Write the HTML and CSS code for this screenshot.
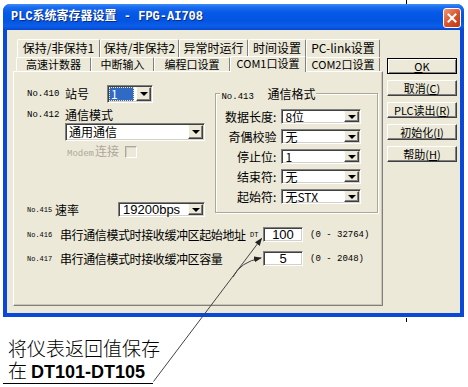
FILE: index.html
```html
<!DOCTYPE html>
<html lang="zh-CN">
<head>
  <meta charset="UTF-8">
  <meta name="viewport" content="width=device-width, initial-scale=1.0">
  <title>PLC系统寄存器设置 - FPG-AI708</title>
  <link rel="stylesheet" href="styles.css">
</head>
<body>
  <div class="page">
    <div class="window">
      <div class="titlebar">
        <span class="title">PLC系统寄存器设置 - FPG-AI708</span>
        <span class="close">
          <svg width="10" height="10" viewBox="0 0 10 10"><path d="M1.5 1.5 L8.5 8.5 M8.5 1.5 L1.5 8.5" stroke="#fff" stroke-width="2" stroke-linecap="square"/></svg>
        </span>
      </div>
      <div class="client">
        <div class="tabbox">
          <div class="tabrow back">
            <span class="tab t1">保持/非保持1</span>
            <span class="tab t2">保持/非保持2</span>
            <span class="tab t3">异常时运行</span>
            <span class="tab t4">时间设置</span>
            <span class="tab t5">PC-link设置</span>
          </div>
          <div class="tabrow front">
            <span class="tab u1">高速计数器</span>
            <span class="tab u2">中断输入</span>
            <span class="tab u3">编程口设置</span>
            <span class="tab u4 active">COM1口设置</span>
            <span class="tab u5">COM2口设置</span>
          </div>
          <div class="panel">
            <div class="upper">
              <div class="leftcol">
                <div class="row r410">
                  <span class="no">No.410</span>
                  <span class="lbl">站号</span>
                  <div class="combo c410"><span class="val sel">1</span><span class="drop"></span></div>
                </div>
                <div class="row r412">
                  <span class="no">No.412</span>
                  <span class="lbl">通信模式</span>
                </div>
                <div class="combo cmode"><span class="val">通用通信</span><span class="drop"></span></div>
                <div class="modem">
                  <span class="modem-text"><span class="latin">Modem</span>连接</span>
                  <span class="chk"></span>
                </div>
                <div class="row r415">
                  <span class="no small">No.415</span>
                  <span class="lbl">速率</span>
                  <div class="combo cbaud"><span class="val num">19200bps</span><span class="drop"></span></div>
                </div>
              </div>
              <div class="group">
                <div class="group-title"><span class="no">No.413</span>通信格式</div>
                <div class="grow"><span class="glbl">数据长度:</span><div class="combo"><span class="val">8位</span><span class="drop"></span></div></div>
                <div class="grow"><span class="glbl">奇偶校验</span><div class="combo"><span class="val">无</span><span class="drop"></span></div></div>
                <div class="grow"><span class="glbl">停止位:</span><div class="combo"><span class="val">1</span><span class="drop"></span></div></div>
                <div class="grow"><span class="glbl">结束符:</span><div class="combo"><span class="val">无</span><span class="drop"></span></div></div>
                <div class="grow"><span class="glbl">起始符:</span><div class="combo"><span class="val">无STX</span><span class="drop"></span></div></div>
              </div>
            </div>
            <div class="row r416">
              <span class="no small">No.416</span>
              <span class="long">串行通信模式时接收缓冲区起始地址</span>
              <span class="dt">DT</span>
              <span class="field">100</span>
              <span class="range">(0 - 32764)</span>
            </div>
            <div class="row r417">
              <span class="no small">No.417</span>
              <span class="long">串行通信模式时接收缓冲区容量</span>
              <span class="dt"></span>
              <span class="field">5</span>
              <span class="range">(0 - 2048)</span>
            </div>
          </div>
        </div>
        <div class="buttons">
          <button class="btn default"><u>O</u>K</button>
          <button class="btn">取消(<u>C</u>)</button>
          <button class="btn">PLC读出(<u>R</u>)</button>
          <button class="btn">初始化(<u>I</u>)</button>
          <button class="btn">帮助(<u>H</u>)</button>
        </div>
      </div>
    </div>
    <div class="note">
      <p>将仪表返回值保存</p>
      <p>在<b>DT101-DT105</b></p>
    </div>
    <!-- callout arrows drawn over the dialog -->
    <svg class="overlay" width="468" height="387" viewBox="0 0 468 387">
      <defs>
        <marker id="ah" markerWidth="8" markerHeight="6" refX="7" refY="3" orient="auto" markerUnits="userSpaceOnUse">
          <path d="M0 0 L8 3 L0 6 Z" fill="#222"/>
        </marker>
      </defs>
      <path d="M153.5 381.5 L261.5 238.5" stroke="#444" stroke-width="1" fill="none" marker-end="url(#ah)"/>
      <path d="M233 277 Q240 262 261 258" stroke="#444" stroke-width="1" fill="none" marker-end="url(#ah)"/>
      <path d="M406.5 0 V4 M406.5 318 V322" stroke="#000" stroke-width="1"/>
    </svg>
  </div>
</body>
</html>
```

FILE: styles.css
```css
body {
  margin: 0;
  background-color: #fff;
  font-family: "Noto Sans CJK SC", sans-serif;
  font-size: 12px;
  color: #000;
}

.page {
  position: relative;
  width: 468px;
  height: 387px;
  padding: 4px 0 0 3px;
  box-sizing: border-box;
  overflow: hidden;
}

.window {
  width: 461px;
  background-color: #0a48d8;
  border-radius: 7px 7px 0 0;
  overflow: hidden;
}

.titlebar {
  display: flex;
  align-items: flex-start;
  height: 26px;
  padding: 0 3px 0 8px;
  background: linear-gradient(#3d8ef7 0%, #1a6cef 12%, #0658e6 35%, #0454e2 65%, #0b5fe9 85%, #0447d2 100%);
}

.title {
  margin-top: 5px;
  font-family: "Liberation Mono", "Noto Sans CJK SC", monospace;
  font-size: 12px;
  font-weight: bold;
  line-height: 16px;
  color: #fff;
  text-shadow: 1px 1px #0c2a80;
  white-space: nowrap;
}

.close {
  display: flex;
  align-items: center;
  justify-content: center;
  margin: 4px 0 0 auto;
  width: 18px;
  height: 20px;
  box-sizing: border-box;
  border: 1px solid #fff;
  border-radius: 3px;
  background: linear-gradient(135deg, #f29873, #d8502a 55%, #b93a14);
}

.client {
  display: flex;
  gap: 4px;
  height: 283px;
  margin: 0 4px 4px;
  padding: 9px 3px 7px 6px;
  box-sizing: border-box;
  background-color: #ece9d8;
}

/* tabs */

.tabbox {
  display: flex;
  flex-direction: column;
  width: 370px;
}

.tabrow {
  display: flex;
}

.tabrow.back {
  height: 18px;
  padding-left: 4px;
}

.tabrow.front {
  height: 14px;
  padding-left: 3px;
}

.tab {
  box-sizing: border-box;
  border: 1px solid;
  border-color: #fff #808080 transparent #fff;
  border-bottom: 0;
  border-radius: 2px 2px 0 0;
  background-color: #ece9d8;
  text-align: center;
  white-space: nowrap;
}

.back .tab {
  height: 18px;
  line-height: 16px;
  font-size: 12px;
}

.front .tab {
  height: 14px;
  line-height: 13px;
  font-size: 11px;
}

.front .tab.active {
  position: relative;
  z-index: 1;
  height: 16px;
  margin-top: -1px;
  line-height: 12px;
}

.t1 { width: 83px; }
.t2 { width: 79px; }
.t3 { width: 69px; }
.t4 { width: 58px; }
.t5 { width: 74px; }
.u1 { width: 75px; }
.u2 { width: 63px; }
.u3 { width: 76px; }
.u4 { width: 76px; }
.u5 { width: 74px; }

.panel {
  flex: 1;
  box-sizing: border-box;
  padding: 13px 4px 0 13px;
  border: 1px solid;
  border-color: #fff #808080 #808080 #fff;
  box-shadow: inset -1px -1px #c9c6b5;
}

.upper {
  display: flex;
}

.leftcol {
  width: 189px;
}

.row {
  display: flex;
  align-items: center;
}

.no {
  display: inline-block;
  width: 38px;
  font-family: "Liberation Mono", monospace;
  font-size: 9px;
}

.no.small {
  width: 33px;
  font-size: 7px;
}

.lbl {
  line-height: 14px;
}

.r410 {
  height: 18px;
}

.r410 .lbl {
  width: 42px;
}

.r412 {
  height: 14px;
  margin-top: 5px;
}

.r415 {
  height: 15px;
  margin-top: 44px;
}

.r415 .no {
  width: 28px;
}

.r415 .lbl {
  width: 63px;
}

/* combo boxes */

.combo {
  display: flex;
  box-sizing: border-box;
  width: 80px;
  height: 15px;
  border: 1px solid;
  border-color: #808080 #fff #fff #808080;
  box-shadow: inset 1px 1px #404040, inset -1px -1px #d4d0c8;
  background-color: #fff;
}

.combo .val {
  flex: 1;
  padding-left: 3px;
  line-height: 13px;
  white-space: nowrap;
}

.combo .drop {
  display: flex;
  align-items: center;
  justify-content: center;
  width: 15px;
  margin: 1px;
  box-sizing: border-box;
  border: 1px solid;
  border-color: #ece9d8 #404040 #404040 #fff;
  box-shadow: inset -1px -1px #808080;
  background-color: #ece9d8;
}

.combo .drop::after {
  content: "";
  width: 0;
  height: 0;
  border-style: solid;
  border-width: 4px 4px 0;
  border-color: #000 transparent transparent;
}

.c410 {
  width: 46px;
  height: 18px;
}

.c410 .val,
.cmode .val {
  line-height: 16px;
}

.val.sel {
  margin: 1px 1px 1px 1px;
  padding-left: 2px;
  line-height: 14px;
  background-color: #316ac5;
  color: #fff;
  outline: 1px dotted #f4e8a0;
  outline-offset: -1px;
}

.c410 .val.sel {
  line-height: 14px;
}

.cmode {
  width: 140px;
  height: 18px;
  margin: 1px 0 0 38px;
}

.cbaud {
  width: 87px;
}

.val.num {
  font-family: "Liberation Sans", sans-serif;
  font-size: 13px;
  padding-left: 4px;
}

.modem {
  display: flex;
  align-items: center;
  height: 12px;
  margin: 5px 0 0 40px;
  color: #aca899;
}

.modem-text {
  width: 58px;
  line-height: 12px;
  white-space: nowrap;
}

.modem-text .latin {
  font-family: "Liberation Mono", monospace;
  font-size: 9px;
  margin-right: 1px;
}

.chk {
  width: 12px;
  height: 12px;
  box-sizing: border-box;
  border: 1px solid;
  border-color: #aca899 #fff #fff #aca899;
  box-shadow: inset 1px 1px #d4d0c8;
}

/* group box */

.group {
  width: 163px;
  height: 120px;
  margin-top: 8px;
  box-sizing: border-box;
  border: 1px solid #aca899;
  box-shadow: inset 1px 1px #fff, 1px 1px #fff;
}

.group-title {
  width: fit-content;
  margin: -7px 0 0 4px;
  padding: 0 1px;
  line-height: 13px;
  background-color: #ece9d8;
}

.group-title .no {
  width: 46px;
}

.grow {
  display: flex;
  align-items: center;
  height: 15px;
  margin-top: 5px;
}

.glbl {
  width: 60px;
  line-height: 15px;
  text-align: right;
  white-space: nowrap;
}

.grow .combo {
  margin-left: 5px;
}

/* bottom rows */

.r416 {
  height: 15px;
  margin-top: 10px;
}

.r417 {
  height: 15px;
  margin-top: 9px;
}

.long {
  width: 190px;
  line-height: 15px;
  letter-spacing: -0.4px;
  white-space: nowrap;
}

.dt {
  width: 13px;
  font-family: "Liberation Mono", monospace;
  font-size: 7px;
}

.field {
  width: 40px;
  height: 15px;
  box-sizing: border-box;
  border: 1px solid;
  border-color: #808080 #fff #fff #808080;
  box-shadow: inset 1px 1px #404040, inset -1px -1px #d4d0c8;
  background-color: #fff;
  font-family: "Liberation Sans", sans-serif;
  font-size: 13px;
  line-height: 13px;
  text-align: center;
}

.range {
  margin-left: 7px;
  font-family: "Liberation Mono", monospace;
  font-size: 9px;
  white-space: nowrap;
}

/* buttons */

.buttons {
  display: flex;
  flex-direction: column;
  gap: 6px;
  width: 70px;
  padding-top: 19px;
}

.btn {
  width: 70px;
  height: 16px;
  padding: 0;
  box-sizing: border-box;
  border: 1px solid;
  border-color: #fff #404040 #404040 #fff;
  box-shadow: inset -1px -1px #808080;
  background-color: #ece9d8;
  font-family: "Noto Sans CJK SC", sans-serif;
  font-size: 11px;
  line-height: 13px;
  color: #000;
}

.btn.default {
  border-color: #000;
  box-shadow: inset 1px 1px #fff, inset -1px -1px #808080;
}

/* callout */

.note {
  width: 150px;
  margin-top: 20px;
  padding-left: 5px;
  box-sizing: border-box;
  border-bottom: 1px solid #000;
}

.note p {
  margin: 0;
  font-size: 19px;
  font-weight: 300;
  line-height: 22px;
  white-space: nowrap;
}

.note b {
  margin-left: 4px;
  font-family: "Liberation Sans", sans-serif;
  font-size: 18px;
  font-weight: bold;
}

.overlay {
  position: absolute;
  top: 0;
  left: 0;
  pointer-events: none;
}
```
